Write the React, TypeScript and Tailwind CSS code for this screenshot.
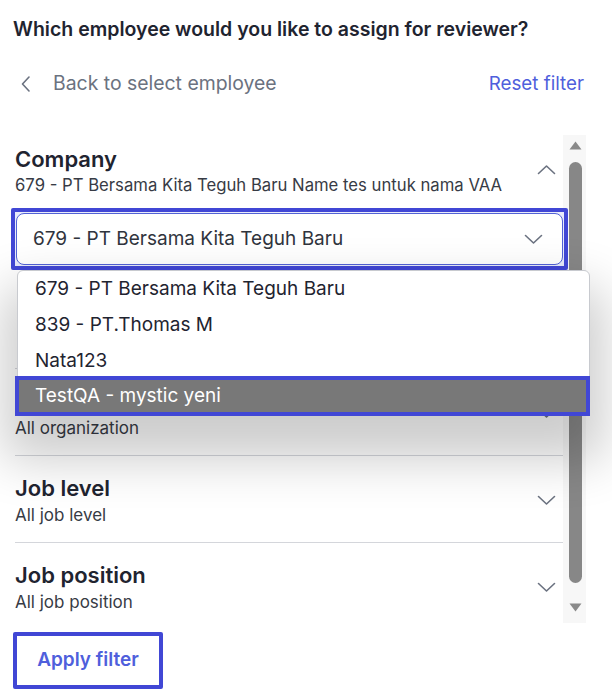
import React from "react";

function ChevronDown({ className = "" }: { className?: string }) {
  return (
    <svg width="19" height="11" viewBox="0 0 19 11" className={className} fill="none">
      <polyline points="1.5,1.5 9.5,9 17.5,1.5" stroke="#6b7280" strokeWidth="1.6" strokeLinecap="round" strokeLinejoin="round" />
    </svg>
  );
}

function ChevronUp({ className = "" }: { className?: string }) {
  return (
    <svg width="19" height="11" viewBox="0 0 19 11" className={className} fill="none">
      <polyline points="1.5,9.5 9.5,2 17.5,9.5" stroke="#6b7280" strokeWidth="1.6" strokeLinecap="round" strokeLinejoin="round" />
    </svg>
  );
}

function Section({ title, sub, last = false }: { title: string; sub: string; last?: boolean }) {
  return (
    <div className={`border-t border-[#d4d6db] pt-[17px] ${last ? "pb-[6px]" : "pb-[16px]"} flex items-center justify-between pr-[7px]`}>
      <div className="flex flex-col gap-[1px]">
        <div className="text-[22px] leading-[30px] font-semibold text-[#1f2430]">{title}</div>
        <div className="text-[17px] leading-[22px] text-[#373b45]">{sub}</div>
      </div>
      <ChevronDown className="mt-[2px]" />
    </div>
  );
}

export default function App() {
  const items = ["679 - PT Bersama Kita Teguh Baru", "839 - PT.Thomas M", "Nata123"];
  return (
    <div className="w-[612px] h-[697px] bg-white relative overflow-hidden font-['Inter',sans-serif]">
      <div className="pl-[13px] pt-[16px] text-[19.5px] leading-[26px] font-semibold text-[#1f2430]">
        Which employee would you like to assign for reviewer?
      </div>

      <div className="mt-[29px] h-[26px] flex items-center justify-between pl-[21px] pr-[28px]">
        <div className="flex items-center gap-[23px] text-[19.4px] text-[#6b7280]">
          <svg width="9" height="16" viewBox="0 0 9 16" fill="none">
            <polyline points="8,1 1.5,8 8,15" stroke="#6b7280" strokeWidth="1.6" strokeLinecap="round" strokeLinejoin="round" />
          </svg>
          <span>Back to select employee</span>
        </div>
        <div className="text-[18.8px] text-[#4f5fdc]">Reset filter</div>
      </div>

      <div className="mt-[38px] h-[488px] flex pl-[15px]">
        <div className="w-[548px] flex flex-col">
          {/* Company */}
          <div className="pt-[9px] pb-[98px]">
            <div className="flex items-center justify-between pr-[7px]">
              <div className="flex flex-col">
                <div className="text-[22px] leading-[30px] font-semibold text-[#1f2430]">Company</div>
                <div className="text-[16.7px] leading-[22px] text-[#373b45]">
                  679 - PT Bersama Kita Teguh Baru Name tes untuk nama VAA
                </div>
              </div>
              <ChevronUp className="mt-[-2px]" />
            </div>
            <div className="relative mt-[12px] -ml-[4px] w-[557px] border-4 border-[#4147d5] rounded-[2px] bg-[#e8ebfb] p-px">
              <div className="h-[52px] bg-white border border-[#5262d6] rounded-[8px] flex items-center justify-between pl-[16px] pr-[19px]">
                <span className="text-[19px] text-[#30343d]">679 - PT Bersama Kita Teguh Baru</span>
                <ChevronDown />
              </div>
              <div className="absolute left-[2px] top-[58px] w-[573px] z-10 bg-white border border-[#c8cacf] rounded-t-[6px] shadow-[0_30px_50px_14px_rgba(0,0,0,0.2)]">
                {items.map((t) => (
                  <div key={t} className="h-[36px] flex items-center pl-[17px] text-[19px] text-[#1f2430]">
                    {t}
                  </div>
                ))}
                <div className="relative h-[36px]">
                  <div className="absolute -left-[3px] -right-[1px] -top-[3px] -bottom-[1px] border-4 border-[#4147d5] bg-[#787878] flex items-center pl-[16px] text-[19px] text-white">
                    TestQA - mystic yeni
                  </div>
                </div>
              </div>
            </div>
          </div>
          <Section title="Organization" sub="All organization" />
          <Section title="Job level" sub="All job level" />
          <Section title="Job position" sub="All job position" last />
        </div>

        {/* scrollbar */}
        <div className="w-[23px] h-[488px] bg-[#f7f7f7] flex flex-col items-center">
          <svg width="13" height="9" viewBox="0 0 13 9" className="mt-[6px] ml-[1px]">
            <polygon points="6.5,0.5 12.5,8.5 0.5,8.5" fill="#8a8a8a" />
          </svg>
          <div className="mt-[12px] ml-[1px] w-[13px] h-[421px] rounded-full bg-[#878787]" />
          <svg width="13" height="9" viewBox="0 0 13 9" className="mt-[20px] ml-[1px]">
            <polygon points="0.5,0.5 12.5,0.5 6.5,8.5" fill="#8a8a8a" />
          </svg>
        </div>
      </div>

      <div className="mt-[9px] ml-[13px] w-[150px] h-[57px] border-4 border-[#4147d5] rounded-[2px] flex items-center justify-center">
        <span className="text-[19px] font-semibold text-[#4f5fdc]">Apply filter</span>
      </div>
    </div>
  );
}
